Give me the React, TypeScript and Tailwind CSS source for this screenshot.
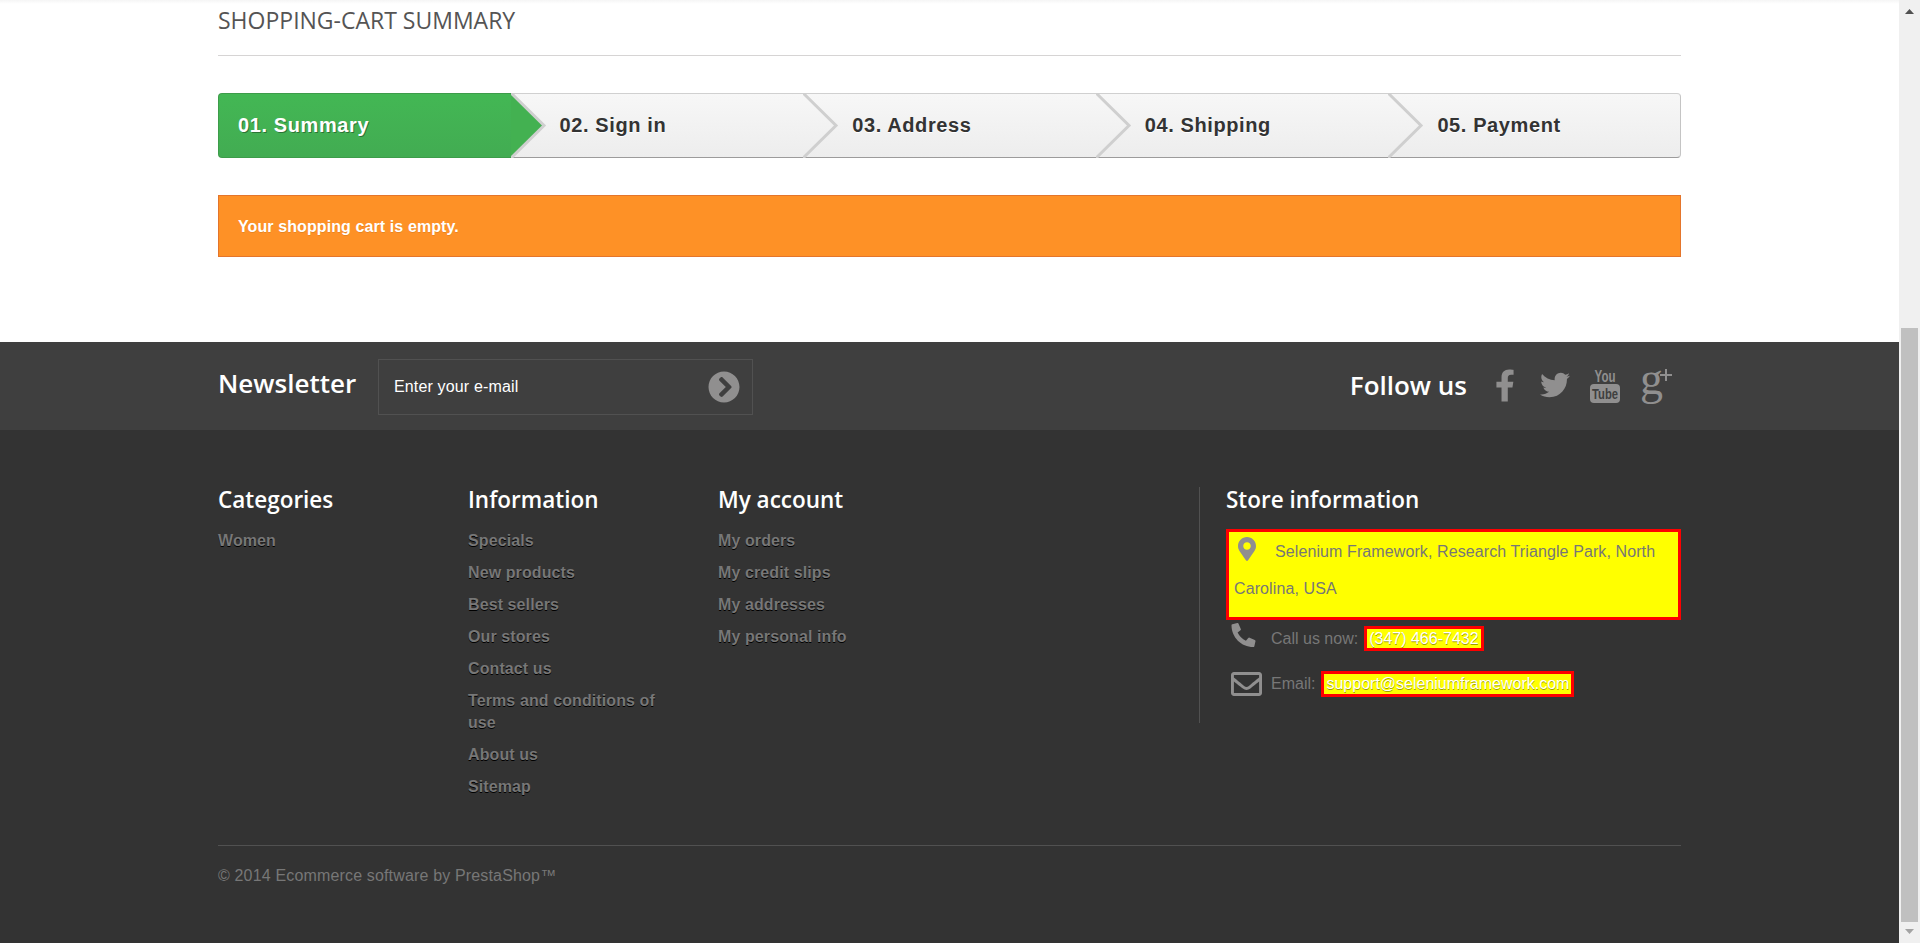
import React from 'react';
import { FaChevronCircleRight, FaFacebookF, FaTwitter, FaMapMarkerAlt, FaPhoneAlt, FaRegEnvelope } from 'react-icons/fa';

const steps = ['01. Summary', '02. Sign in', '03. Address', '04. Shipping', '05. Payment'];

const columns = [
  { title: 'Categories', links: ['Women'] },
  {
    title: 'Information',
    links: ['Specials', 'New products', 'Best sellers', 'Our stores', 'Contact us', 'Terms and conditions of use', 'About us', 'Sitemap'],
  },
  { title: 'My account', links: ['My orders', 'My credit slips', 'My addresses', 'My personal info'] },
];

const headingClass = "font-['Open_Sans'] font-semibold text-white";

function Step({ label, index }: { label: string; index: number }) {
  const active = index === 0;
  const last = index === steps.length - 1;
  return (
    <li
      className={`relative w-1/5 flex items-center h-[65px] pb-[2px] text-[20px] font-bold tracking-[0.6px] border-y ${
        active
          ? 'bg-gradient-to-b from-[#43b754] to-[#42ac52] border-t-[#3d9c4a] border-b-[#3d9c4a] border-l rounded-l-[4px] border-l-[#3d9c4a] text-white pl-[19px] [text-shadow:1px_1px_rgba(0,0,0,0.35)]'
          : `bg-gradient-to-b from-[#f7f7f7] to-[#ededed] border-t-[#d0d0d0] border-b-[#9c9b9b] text-[#333333] pl-[49px] [text-shadow:0_1px_#ffffff] ${
              last ? 'border-r border-r-[#c4c4c4] rounded-r-[4px]' : ''
            }`
      }`}
    >
      {label}
      {!last && (
        <svg className="absolute top-[-1px] left-full z-10 w-[36px] h-[65px]" viewBox="0 0 36 65">
          {active && <polygon points="0,0 33,32.5 0,65" fill="#43b151" />}
          <polyline points="0,0 33,32.5 0,65" fill="none" stroke="#cfcfcf" strokeWidth="3" />
        </svg>
      )}
    </li>
  );
}

function ScrollBar() {
  return (
    <div className="w-[21px] h-full shrink-0 bg-[#f0f0f0] flex flex-col items-center">
      <svg className="w-[9px] h-[5px] mt-[9px] shrink-0" viewBox="0 0 9 5">
        <polygon points="4.5,0 9,5 0,5" fill="#505050" />
      </svg>
      <div className="w-[17px] mt-[314px] flex-1 bg-[#c0c0c0]" />
      <svg className="w-[9px] h-[5px] mt-[7px] mb-[9px] shrink-0" viewBox="0 0 9 5">
        <polygon points="0,0 9,0 4.5,5" fill="#a3a3a3" />
      </svg>
    </div>
  );
}

// stacked "You / Tube" mark, the icon packages only have the wide one
function YoutubeIcon() {
  return (
    <svg className="w-[30px] h-[35px] mr-[20px] shrink-0" viewBox="0 0 30 35">
      <text transform="translate(15 14) scale(0.72 1)" textAnchor="middle" fontSize="16" fontWeight="700" fontFamily="Liberation Sans" fill="currentColor">
        You
      </text>
      <rect x="0" y="16" width="30" height="19" rx="4" fill="currentColor" />
      <text transform="translate(15 31) scale(0.75 1)" textAnchor="middle" fontSize="15" fontWeight="700" fontFamily="Liberation Sans" fill="#3f3f3f">
        Tube
      </text>
    </svg>
  );
}

export default function App() {
  return (
    <div className="flex h-[943px] overflow-hidden bg-white font-['Liberation_Sans',Arial,sans-serif]">
      <div className="flex-1 flex flex-col">
        <div className="h-[4px] bg-gradient-to-b from-[#f5f5f5] to-white" />
        <div className="px-[218px]">
          <h1 className="h-[52px] border-b border-[#d6d4d4] font-['Open_Sans'] font-medium text-[23px] leading-[32px] text-[#555454] uppercase">
            Shopping-cart summary
          </h1>
          <ul className="flex mt-[37px]">
            {steps.map((s, i) => (
              <Step key={s} label={s} index={i} />
            ))}
          </ul>
          <p className="mt-[37px] h-[62px] flex items-center pt-[1px] pl-[19px] bg-[#fe9126] border border-[#e4752b] text-white font-bold text-[16px] tracking-[0.1px] [text-shadow:0_1px_rgba(0,0,0,0.1)]">
            Your shopping cart is empty.
          </p>
        </div>

        <footer className="mt-[85px] flex-1 bg-[#333333]">
          <div className="h-[88px] bg-[#3f3f3f] px-[218px] flex items-start justify-between">
            <div className="flex items-center mt-[17px]">
              <h4 className={`${headingClass} text-[26px] leading-[32px] w-[160px] -mt-[9px]`}>Newsletter</h4>
              <div className="w-[375px] h-[56px] border border-[#515151] flex items-center justify-between pl-[15px] pr-[12px] text-white text-[16px] tracking-[0.15px]">
                <span>Enter your e-mail</span>
                <FaChevronCircleRight className="text-[#908f8f] w-[32px] h-[32px]" />
              </div>
            </div>
            <div className="flex items-center mt-[25px] pr-[9px] text-[#908f8f]">
              <h4 className={`${headingClass} text-[26px] leading-[36px] mr-[30px]`}>Follow us</h4>
              <div className="flex items-center w-[16px] h-[33px] mr-[27px]">
                <FaFacebookF className="w-[20px] h-[33px] shrink-0 -ml-[2px]" />
              </div>
              <FaTwitter className="w-[30px] h-[30px] mr-[20px]" />
              <YoutubeIcon />
              <div className="relative w-[32px] h-[33px]">
                <span className="block font-['Liberation_Serif'] text-[46px] leading-[33px] -mt-[7px]">g</span>
                <svg className="absolute left-[20px] top-0 w-[12px] h-[12px]" viewBox="0 0 12 12">
                  <path d="M6 0v12M0 6h12" stroke="currentColor" strokeWidth="2" fill="none" />
                </svg>
              </div>
            </div>
          </div>

          <div className="px-[218px] pt-[57px] flex items-start">
            {columns.map((col) => (
              <div key={col.title} className="w-[250px] pr-[50px]">
                <h4 className={`${headingClass} text-[22.5px] leading-[25px] mb-[18px]`}>{col.title}</h4>
                <ul>
                  {col.links.map((l) => (
                    <li key={l} className="pb-[10px] text-[16px] tracking-[0.1px] leading-[22px] font-bold text-[#777777] [text-shadow:0_1px_#000000]">
                      {l}
                    </li>
                  ))}
                </ul>
              </div>
            ))}
            <div className="ml-auto w-[482px] h-[236px] border-l border-[#515151] pl-[26px] text-[16px] text-[#777777]">
              <h4 className={`${headingClass} text-[22.5px] leading-[25px] mb-[17px]`}>Store information</h4>
              <div className="border-[3px] border-[#ff0000] bg-[#ffff00] pt-[1px] px-[5px] pb-[10px] leading-[37px] tracking-[0.1px]">
                <FaMapMarkerAlt className="inline-block align-top mt-[3px] ml-[4px] mr-[19px] w-[18px] h-[26px] text-[#908f8f]" />
                Selenium Framework, Research Triangle Park, North Carolina, USA
              </div>
              <div className="flex items-center mt-[6px] pl-[5px] h-[25px]">
                <FaPhoneAlt className="w-[25px] h-[24px] mr-[15px] -mt-[8px] text-[#908f8f]" />
                <span>Call us now:</span>
                <span className="ml-[6px] border-[3px] border-[#ff0000] bg-[#ffff00] text-white px-[2px] leading-[19px] [text-shadow:0_1px_rgba(0,0,0,0.4)]">
                  (347) 466-7432
                </span>
              </div>
              <div className="flex items-center mt-[20px] pl-[5px] h-[26px]">
                <FaRegEnvelope preserveAspectRatio="none" className="w-[31px] h-[32px] shrink-0 mr-[9px] text-[#908f8f]" />
                <span>Email:</span>
                <span className="ml-[6px] border-[3px] border-[#ff0000] bg-[#ffff00] text-white px-[2px] leading-[20px] [text-shadow:0_1px_rgba(0,0,0,0.4)]">
                  support@seleniumframework.com
                </span>
              </div>
            </div>
          </div>

          <div className="mx-[218px] mt-[37px] border-t border-[#515151] pt-[19px] text-[16px] tracking-[0.16px] leading-[22px] text-[#777777]">
            © 2014 Ecommerce software by PrestaShop™
          </div>
        </footer>
      </div>
      <ScrollBar />
    </div>
  );
}
